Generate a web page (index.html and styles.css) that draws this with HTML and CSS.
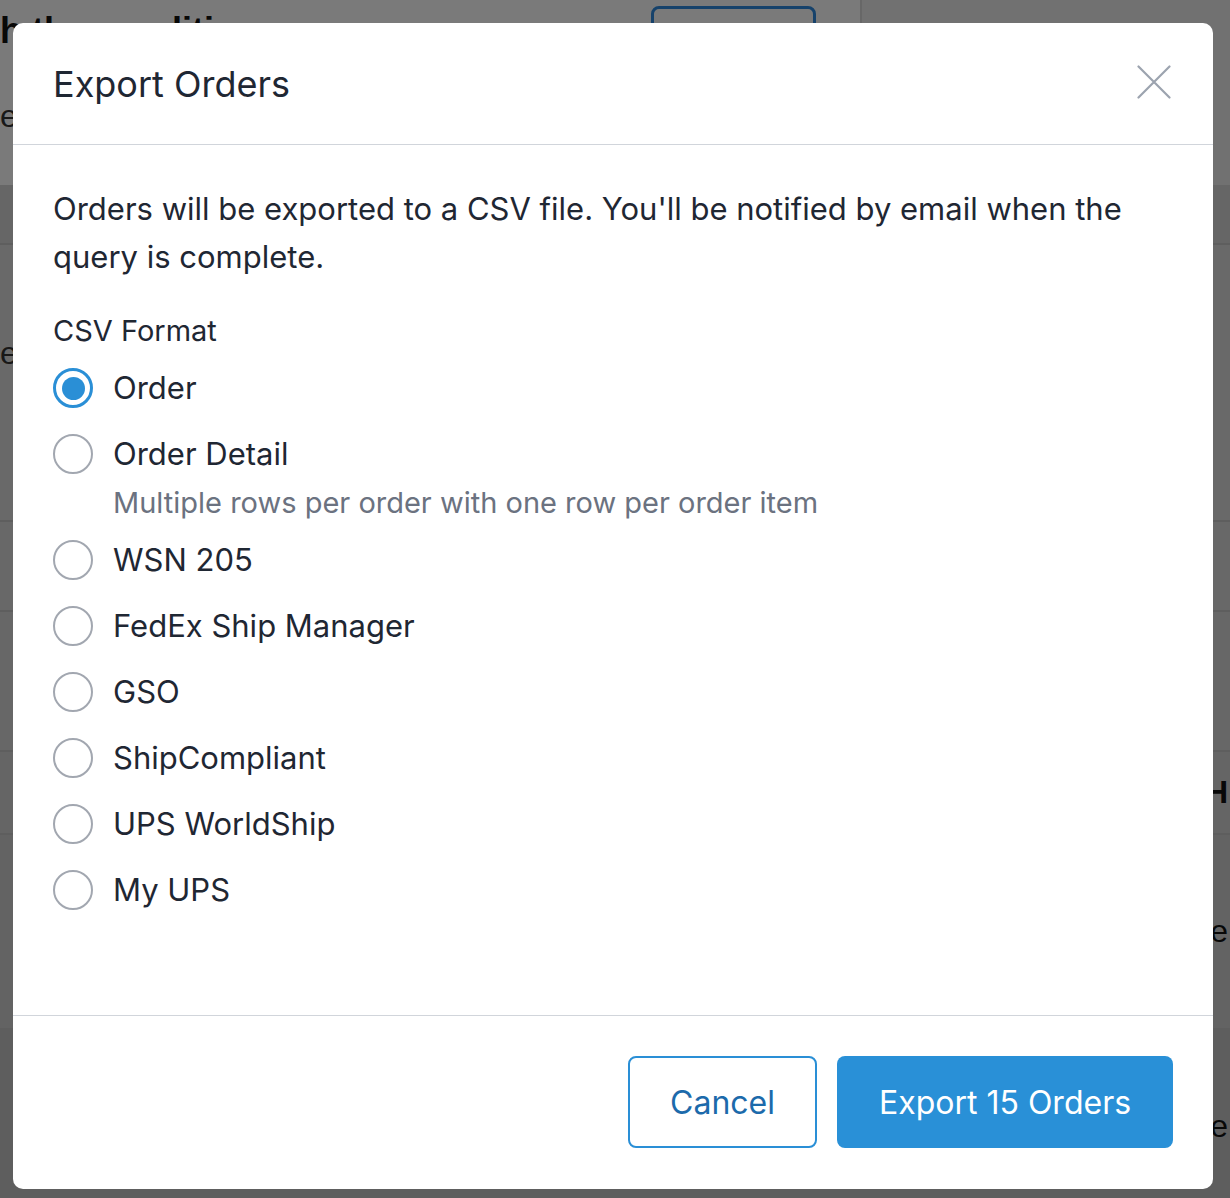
FILE: index.html
```html
<!DOCTYPE html>
<html lang="en">
<head>
<meta charset="utf-8">
<title>Export Orders</title>
<link rel="stylesheet" href="styles.css">
</head>
<body>
<div class="page">
  <div class="page-row row-top">
    <div class="top-main">
      <div class="top-left">
        <span class="top-title">h the conditions</span>
        <span class="top-sub">e</span>
      </div>
      <span class="top-btn">+ Add</span>
    </div>
    <div class="top-side"></div>
  </div>
  <div class="page-row row-band"></div>
  <div class="page-row row-a"><span class="frag">e</span></div>
  <div class="page-row row-b"></div>
  <div class="page-row row-c"></div>
  <div class="page-row row-d"><span class="frag frag-right bold">H</span></div>
  <div class="page-row row-e"><span class="frag frag-right">e</span></div>
  <div class="page-row row-f"><span class="frag frag-right">e</span></div>
</div>

<div class="overlay">
  <div class="modal">
    <div class="modal-header">
      <h2 class="modal-title">Export Orders</h2>
      <button class="close-btn" aria-label="Close">
        <svg width="34" height="34" viewBox="0 0 34 34"><path d="M1.5 1.5 L32.5 32.5 M32.5 1.5 L1.5 32.5" stroke="#9ca3af" stroke-width="2.2" stroke-linecap="round" fill="none"/></svg>
      </button>
    </div>
    <div class="modal-body">
      <p class="intro">Orders will be exported to a CSV file. You'll be notified by email when the query is complete.</p>
      <div class="field-label">CSV Format</div>
      <div class="options">
        <div class="option"><span class="radio checked"></span><div class="opt-text"><div class="opt-label">Order</div></div></div>
        <div class="option"><span class="radio"></span><div class="opt-text"><div class="opt-label">Order Detail</div><div class="opt-sub">Multiple rows per order with one row per order item</div></div></div>
        <div class="option"><span class="radio"></span><div class="opt-text"><div class="opt-label">WSN 205</div></div></div>
        <div class="option"><span class="radio"></span><div class="opt-text"><div class="opt-label">FedEx Ship Manager</div></div></div>
        <div class="option"><span class="radio"></span><div class="opt-text"><div class="opt-label">GSO</div></div></div>
        <div class="option"><span class="radio"></span><div class="opt-text"><div class="opt-label">ShipCompliant</div></div></div>
        <div class="option"><span class="radio"></span><div class="opt-text"><div class="opt-label">UPS WorldShip</div></div></div>
        <div class="option"><span class="radio"></span><div class="opt-text"><div class="opt-label">My UPS</div></div></div>
      </div>
    </div>
    <div class="modal-footer">
      <button class="btn btn-outline">Cancel</button>
      <button class="btn btn-primary">Export 15 Orders</button>
    </div>
  </div>
</div>
</body>
</html>
```

FILE: styles.css
```css
* { box-sizing: border-box; }
html, body { margin: 0; padding: 0; }
body {
  width: 1230px;
  height: 1198px;
  overflow: hidden;
  font-family: Inter, "Noto Sans", "Liberation Sans", sans-serif;
  background: #ffffff;
  position: relative;
}

/* background page */
.page {
  display: flex;
  flex-direction: column;
  height: 1198px;
}
.page-row {
  border-bottom: 2px solid #c4c4c4;
  display: flex;
  align-items: center;
  overflow: hidden;
  color: #111;
  font-family: "Liberation Sans", sans-serif;
  font-size: 32px;
}
.row-top { height: 185px; align-items: stretch; border-bottom: none; }
.top-main {
  width: 862px;
  background: #ffffff;
  border-right: 2px solid #d8d8d8;
  display: flex;
  align-items: flex-start;
  justify-content: space-between;
  padding: 10px 44px 0 0;
}
.top-left {
  display: flex;
  flex-direction: column;
  gap: 46px;
}
.top-title { font-weight: 700; font-size: 36px; }
.top-sub { color: #333; }
.top-btn {
  margin-top: -4px;
  width: 165px;
  height: 70px;
  border: 3px solid #2e8be0;
  border-radius: 8px;
  font-size: 30px;
  text-align: center;
  line-height: 64px;
  color: #2e8be0;
}
.top-side { flex: 1; background: #ececec; }
.row-band { height: 60px; background: #d6d6d6; }
.row-a { height: 277px; background: #dcdcdc; align-items: flex-start; padding-top: 90px; color: #333; }
.row-b { height: 90px; background: #dadada; }
.row-c { height: 140px; background: #d8d8d8; }
.row-d { height: 83px; background: #d4d4d4; }
.row-e { height: 195px; background: #cfcfcf; }
.row-f { flex: 1; background: #c4c4c4; border-bottom: none; align-items: flex-start; padding-top: 78px; }
.frag-right { margin-left: auto; margin-right: 2px; }
.bold { font-weight: 700; }

/* overlay + modal */
.overlay {
  position: absolute;
  inset: 0;
  background: rgba(0, 0, 0, 0.52);
  padding: 23px 17px 9px 13px;
}
.modal {
  width: 1200px;
  height: 1166px;
  background: #ffffff;
  border-radius: 10px;
  display: flex;
  flex-direction: column;
  overflow: hidden;
  color: #1f2733;
}
.modal-header {
  height: 122px;
  border-bottom: 1px solid #d1d5db;
  display: flex;
  align-items: center;
  justify-content: space-between;
  padding: 0 42px 0 40px;
}
.modal-title {
  margin: 0;
  font-size: 36px;
  line-height: 44px;
  font-weight: 400;
  color: #1f2733;
}
.close-btn {
  background: none;
  border: none;
  padding: 0;
  width: 34px;
  height: 34px;
  margin-top: -4px;
  display: flex;
}
.modal-body {
  flex: 1;
  padding: 40px 40px 0 40px;
}
.intro {
  margin: 0;
  font-size: 31px;
  line-height: 48px;
  color: #1f2733;
}
.field-label {
  margin-top: 29px;
  font-size: 29px;
  line-height: 42px;
  color: #1f2733;
}
.options {
  margin-top: 3px;
  display: flex;
  flex-direction: column;
}
.option {
  display: flex;
  align-items: flex-start;
  gap: 20px;
  padding: 9px 0;
}
.radio {
  width: 40px;
  height: 40px;
  flex: none;
  margin-top: 4px;
  border-radius: 50%;
  border: 2px solid #a2a7b0;
  display: flex;
  align-items: center;
  justify-content: center;
}
.radio.checked {
  border: 3px solid #2a8fd6;
}
.radio.checked::after {
  content: "";
  width: 23px;
  height: 23px;
  border-radius: 50%;
  background: #2a8fd6;
}
.opt-label {
  font-size: 31px;
  line-height: 48px;
  color: #1f2733;
}
.opt-sub {
  font-size: 29px;
  line-height: 40px;
  margin: 5px 0 -5px;
  color: #6b7280;
}
.modal-footer {
  border-top: 1px solid #d1d5db;
  padding: 40px 40px 41px;
  display: flex;
  justify-content: flex-end;
  gap: 20px;
}
.btn {
  height: 92px;
  border-radius: 8px;
  font-family: Inter, "Noto Sans", "Liberation Sans", sans-serif;
  font-size: 32px;
  padding: 0;
  cursor: pointer;
}
.btn-outline {
  width: 189px;
  background: #ffffff;
  border: 2px solid #2a8fd6;
  color: #1c6aab;
}
.btn-primary {
  width: 336px;
  background: #2990d7;
  border: none;
  color: #ffffff;
}
```
